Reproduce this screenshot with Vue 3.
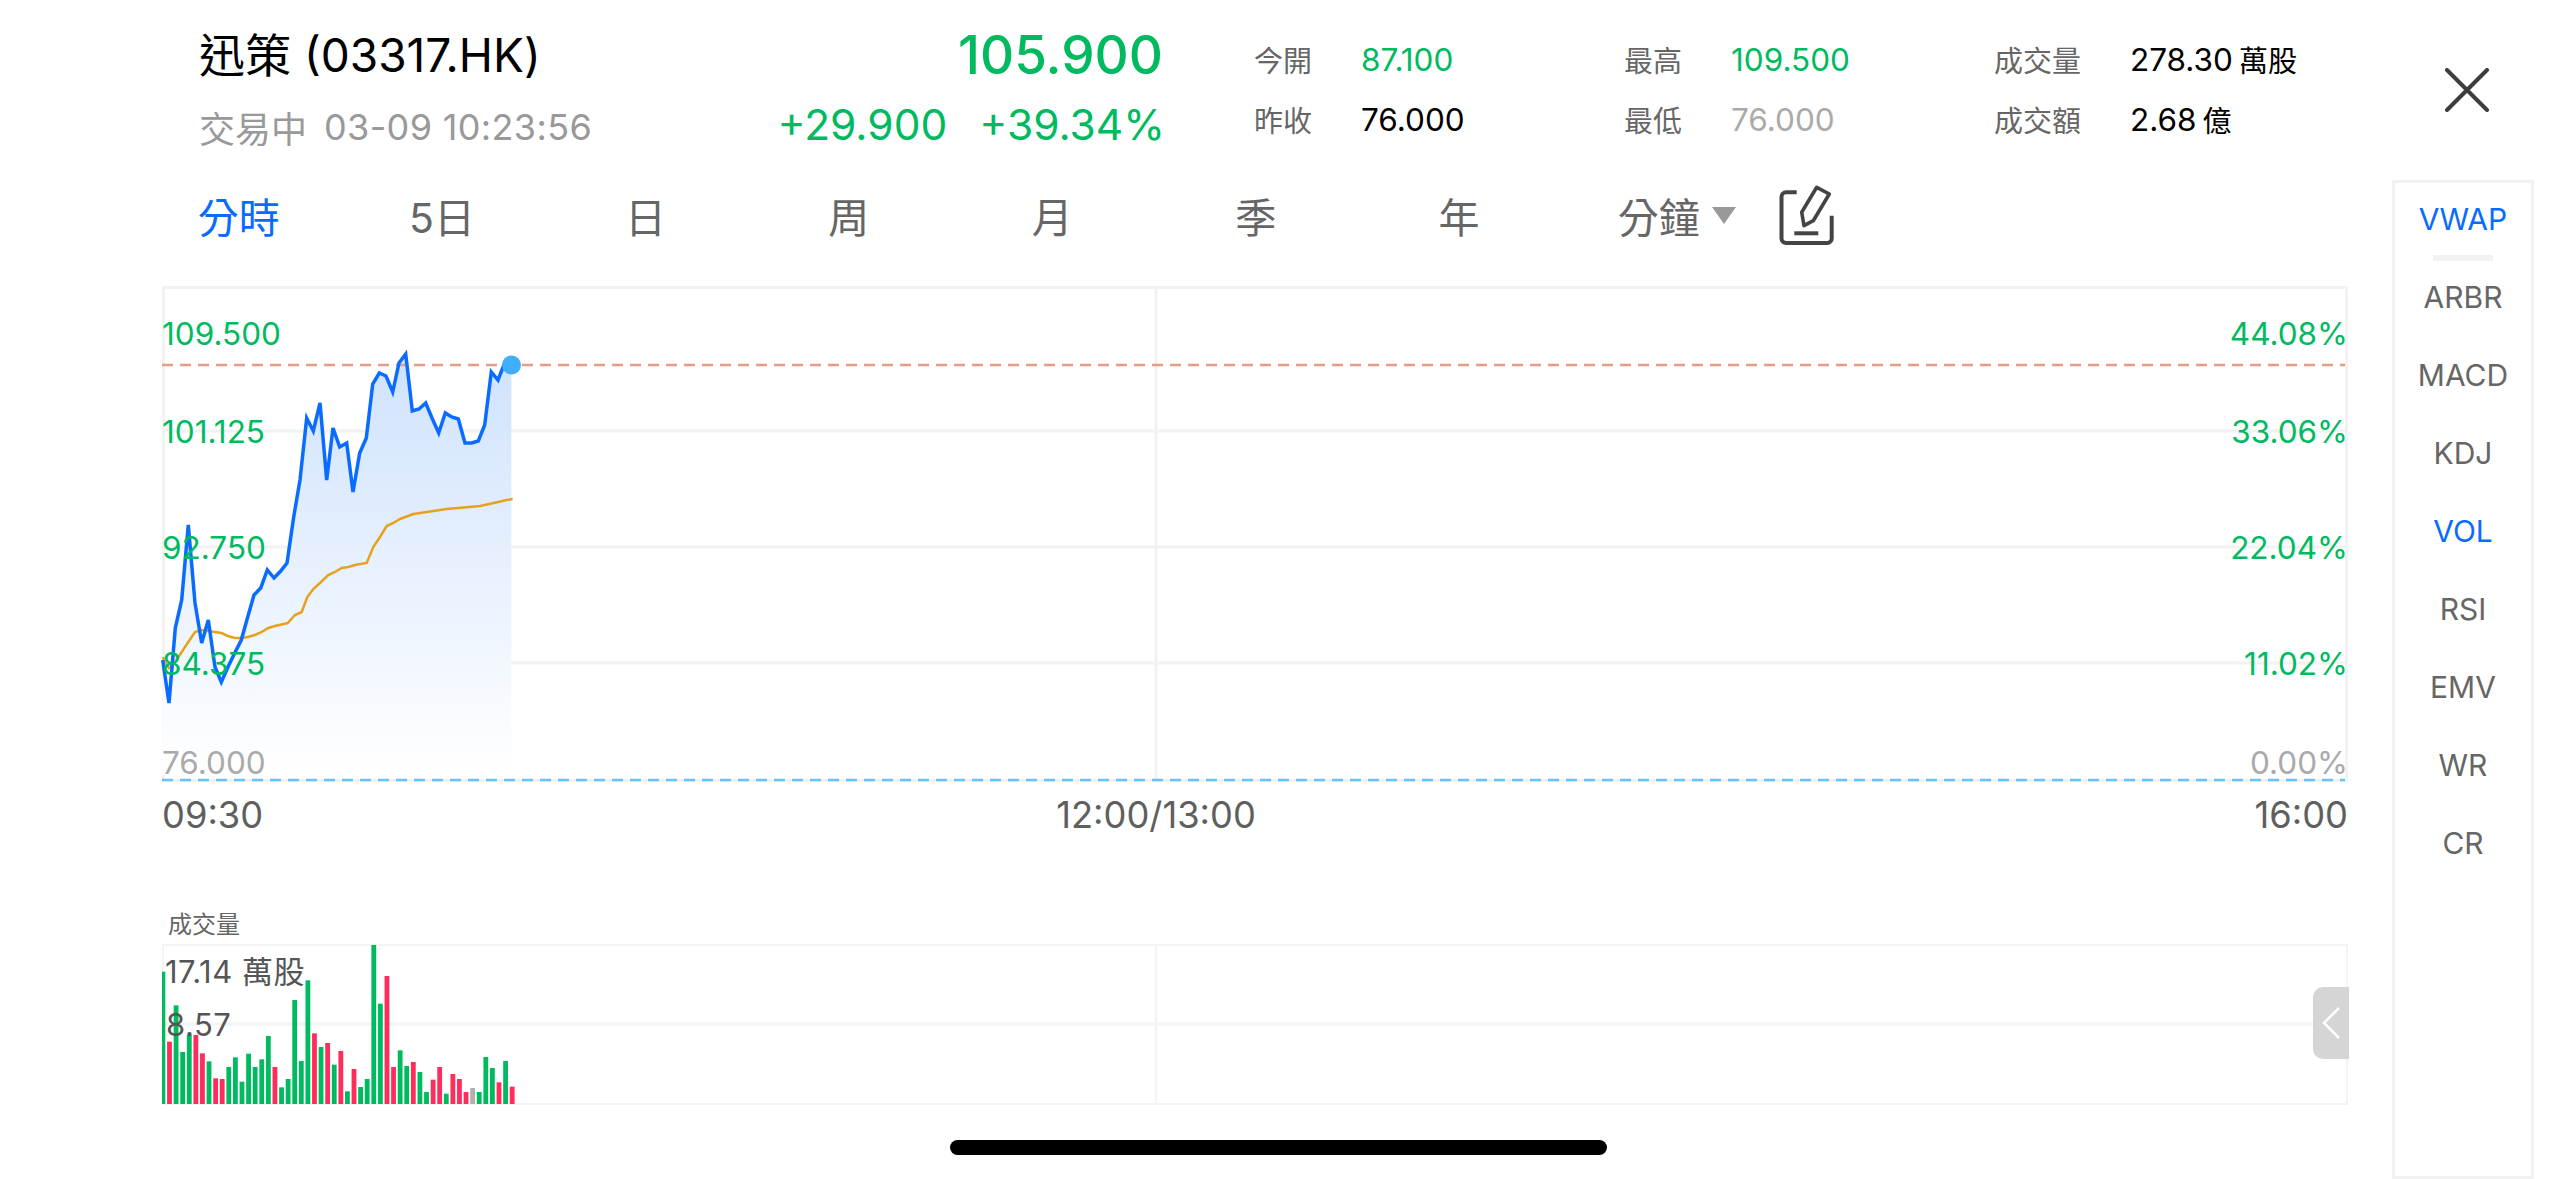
<script setup>
const blue = [[162.7,660],[169,703],[175.3,628],[181.7,600],[188.3,525],[195,603],[201.7,643],[208.3,620],[215,667],[221.3,682],[228,667],[234.7,653],[241.3,640],[247.7,617],[254,595],[260.7,588],[267.3,570],[274,578],[280.7,571],[287,563],[293.7,517],[300,480],[306.7,418],[313.3,431],[320,403],[326.7,480],[333,428],[339.7,447],[346.7,443],[353,492],[359.7,453],[366.3,438],[372.7,384],[379.3,373],[386,376],[392.7,392],[399,363],[405.7,354],[412.3,411],[419,409],[425.7,403],[432,418],[438.7,433],[445.3,413],[451.7,417],[458.3,419],[465,443],[471.7,443],[478.3,441],[484.7,425],[491.3,372],[498,380],[504.7,363],[511.3,365]]
const orange = [[162.7,657],[169,668],[175.3,662],[181.7,652],[188.3,642],[195,632],[201.7,630],[208.3,631],[221.3,633],[228,636],[234.7,638],[241.3,638],[247.7,637],[255,635],[261.7,632],[268.3,628],[275,626],[287.7,623],[295,615],[301.7,612],[307.3,597],[313.3,589],[320,583],[328.3,575],[335,572],[341.7,568],[348.3,567],[355,565],[366.7,563],[373.3,547],[380,537],[386.7,526],[393.3,523],[400,519],[413.3,514],[420,513],[426.7,512],[440,510],[446.7,509],[458.3,508],[480,506],[498.3,502],[506.7,500],[512.7,499]]
const str = (a) => a.map((p) => p.join(',')).join(' ')
const bluePts = str(blue)
const orangePts = str(orange)
const areaPts = `162,775 ${bluePts} 511.3,775`

const g = '#00ba5f', r = '#ff2d5c', n = '#b0b0b0'
const vols = [[215,g],[425,r],[316,g],[456,g],[405,g],[405,r],[460,r],[484,g],[535,r],[537,r],[501,g],[472,g],[545,g],[461,g],[501,g],[478,g],[408,g],[501,r],[562,g],[537,g],[300,g],[483,g],[241,g],[400,r],[441,g],[429,r],[494,g],[453,r],[574,g],[507,r],[561,g],[537,g],[135,g],[311,g],[228,r],[501,r],[451,g],[498,g],[486,r],[516,g],[576,g],[539,r],[501,r],[581,g],[522,r],[537,r],[576,r],[564,n],[576,g],[471,g],[504,g],[547,r],[483,g],[560,r]]
const bars = vols.map(([top, fill], i) => {
  const cx = 162.9 + i * 6.59
  const x = Math.max(162, cx - 2.4)
  const y = 900 + top / 3
  return { x, y, w: cx + 2.4 - x, h: 1104 - y, fill }
})

const tabs = ['分時', '5日', '日', '周', '月', '季', '年']
const stats = [
  [['今開', '87.100', 'up'], ['昨收', '76.000', '']],
  [['最高', '109.500', 'up'], ['最低', '76.000', 'dim']],
  [['成交量', '278.30', '', '萬股'], ['成交額', '2.68', '', '億']],
]
const sideItems = ['ARBR', 'MACD', 'KDJ', 'VOL', 'RSI', 'EMV', 'WR', 'CR']

const leftLabels = [['109.500', 345], ['101.125', 443], ['92.750', 559], ['84.375', 675]]
const rightLabels = [['44.08%', 345], ['33.06%', 443], ['22.04%', 559], ['11.02%', 675]]
</script>

<template>
  <div class="page">
    <div class="main">
      <header class="head">
        <div class="quote">
          <div class="q-row">
            <span class="name">迅策 (03317.HK)</span>
            <span class="price">105.900</span>
          </div>
          <div class="q-row second">
            <span class="status"><span>交易中</span><span class="clock">03-09 10:23:56</span></span>
            <span class="change"><span>+29.900</span><span>+39.34%</span></span>
          </div>
        </div>
        <div class="stats">
          <div v-for="(col, ci) in stats" :key="ci" class="stat-col">
            <div v-for="s in col" :key="s[0]" class="stat">
              <span class="stat-l">{{ s[0] }}</span>
              <span class="stat-v" :class="s[2]">{{ s[1] }}</span>
              <span v-if="s[3]" class="unit">{{ s[3] }}</span>
            </div>
          </div>
        </div>
      </header>

      <nav class="tabs">
        <span v-for="(t, i) in tabs" :key="t" class="tab" :class="{ on: i === 0 }">{{ t }}</span>
        <span class="tab menu">分鐘<i class="tri"></i></span>
        <svg class="draw" width="64" height="66" viewBox="0 0 64 66" fill="none" stroke="#444" stroke-width="4">
          <path d="M21.7 8.3H11a4.5 4.5 0 0 0-4.500 4.500V54.500A4.500 4.500 0 0 0 11 59H52.200a4.500 4.500 0 0 0 4.500-4.500V31.700"/>
          <path d="M26.700 28.300 41.700 3.300 54.300 10 38.300 36.700 29 41.700Z" stroke-width="3.600" stroke-linejoin="round"/>
          <path d="M19.300 49.300H43.300"/>
        </svg>
      </nav>

      <svg class="plot" width="2394" height="1179" viewBox="0 0 2394 1179">
        <defs>
          <linearGradient id="area" x1="0" y1="354" x2="0" y2="775" gradientUnits="userSpaceOnUse">
            <stop offset="0" stop-color="#cfe2fd"/>
            <stop offset="1" stop-color="#ffffff"/>
          </linearGradient>
        </defs>
        <!-- price chart frame and grid -->
        <g stroke="#f2f2f2" fill="none">
          <rect x="163.500" y="287.500" width="2183" height="493" stroke-width="3"/>
          <path d="M162 431H2347M162 547H2347M162 663H2347M1156 287V780" stroke-width="3"/>
        </g>
        <polygon :points="areaPts" fill="url(#area)"/>
        <path d="M162 365H2345" stroke="#e69d85" stroke-width="2.500" stroke-dasharray="11 7"/>
        <path d="M162 780H2345" stroke="#68c2f8" stroke-width="2.500" stroke-dasharray="11 7"/>
        <polyline :points="orangePts" fill="none" stroke="#e5a21c" stroke-width="2.500"/>
        <polyline :points="bluePts" fill="none" stroke="#0a6cff" stroke-width="3.500"/>
        <circle cx="511.500" cy="365" r="9.500" fill="#41aefc"/>

        <text v-for="l in leftLabels" :key="l[0]" class="axis up" x="162" :y="l[1]">{{ l[0] }}</text>
        <text class="axis dim" x="162" y="774">76.000</text>
        <text v-for="l in rightLabels" :key="l[0]" class="axis up" x="2348" :y="l[1]" text-anchor="end">{{ l[0] }}</text>
        <text class="axis dim" x="2348" y="774" text-anchor="end">0.00%</text>

        <text class="time" x="162" y="828">09:30</text>
        <text class="time" x="1156" y="828" text-anchor="middle">12:00/13:00</text>
        <text class="time" x="2348" y="828" text-anchor="end">16:00</text>

        <!-- volume chart -->
        <text class="vol-title" x="168" y="933">成交量</text>
        <g stroke="#f4f4f4" fill="none" stroke-width="2">
          <rect x="163" y="945" width="2184" height="159"/>
          <path d="M1156 945V1104"/>
          <path d="M162 1024H2347" stroke-width="3"/>
        </g>
        <rect v-for="(b, i) in bars" :key="i" :x="b.x" :y="b.y" :width="b.w" :height="b.h" :fill="b.fill"/>
        <text class="vol-l" x="165" y="983">17.14 萬股</text>
        <text class="vol-l" x="166" y="1036">8.57</text>
      </svg>

      <div class="handle">
        <svg width="20" height="34" viewBox="0 0 20 34" fill="none" stroke="#fff" stroke-width="2.500"><path d="M18 2 3 17l15 15"/></svg>
      </div>
    </div>

    <aside class="side-wrap">
      <button class="close" aria-label="關閉">
        <svg width="44" height="44" viewBox="0 0 44 44" stroke="#3d3d3d" stroke-width="4" stroke-linecap="round"><path d="M2 2 42 42M42 2 2 42"/></svg>
      </button>
      <div class="side">
        <div class="side-item on">VWAP</div>
        <div class="side-rule"></div>
        <div v-for="s in sideItems" :key="s" class="side-item" :class="{ on: s === 'VOL' }">{{ s }}</div>
      </div>
    </aside>

    <div class="home"></div>
  </div>
</template>

<style>
html, body { margin: 0; background: #fff; }
</style>

<style scoped>
.page {
  position: relative;
  width: 2556px;
  height: 1179px;
  display: flex;
  overflow: hidden;
  background: #fff;
  font-family: Inter, "Noto Sans CJK TC", sans-serif;
}
.main { position: relative; width: 2392px; flex: none; }
.head {
  display: flex;
  padding: 27px 0 0 199px;
  height: 140px;
  box-sizing: border-box;
}
.quote { width: 964px; flex: none; }
.q-row { display: flex; justify-content: space-between; align-items: center; height: 56px; }
.second { margin-top: 19px; height: 50px; }
.name { font-size: 46px; color: #000; margin-bottom: 6px; }
.price { font-size: 53px; color: #00ba5f; font-weight: 500; }
.status { display: flex; gap: 17px; font-size: 36px; color: #999; }
.clock { margin-top: 4px; letter-spacing: 0.35px; }
.change { display: flex; gap: 32px; font-size: 42.500px; color: #00ba5f; margin: 0 -2px 6px 0; }
.stats { display: flex; margin-left: 91px; padding-top: 12px; }
.stat-col { width: 370px; flex: none; display: flex; flex-direction: column; gap: 20px; }
.stat { display: flex; align-items: center; height: 40px; }
.stat-l { width: 107px; flex: none; font-size: 29px; color: #666; white-space: nowrap; }
.stat-col:last-child .stat-l { width: 136px; }
.stat-v { font-size: 31.500px; color: #000; white-space: nowrap; }
.stat-v.up { color: #00ba5f; }
.stat-v.dim { color: #aaa; }
.unit { font-size: 29px; color: #000; margin-left: 6px; }

.tabs {
  display: flex;
  align-items: center;
  padding-left: 137px;
  height: 76px;
  margin-top: 37px;
}
.tab { width: 203.400px; flex: none; text-align: center; font-size: 41px; color: #666; }
.tab.on { color: #0a6cff; }
.tab.menu { display: flex; align-items: center; gap: 12px; padding-left: 57px; box-sizing: border-box; }
.tri { width: 0; height: 0; border-left: 12px solid transparent; border-right: 12px solid transparent; border-top: 17px solid #999; }
.draw { margin: 4px 0 0 11px; flex: none; }

.plot { position: absolute; left: 0; top: 0; pointer-events: none; }
.axis { font-size: 31.500px; font-family: Inter, sans-serif; }
.axis.up { fill: #00ba5f; }
.axis.dim { fill: #aaa; }
.time { font-size: 36.300px; fill: #5f5f5f; font-family: Inter, sans-serif; }
.vol-title { font-size: 24px; fill: #666; }
.vol-l { font-size: 31px; fill: #555; letter-spacing: 0.5px; }

.handle {
  position: absolute;
  left: 2313px;
  top: 987px;
  width: 36px;
  height: 72px;
  background: #d5d5d5;
  border-radius: 10px 0 0 10px;
  display: flex;
  align-items: center;
  padding-left: 8px;
  box-sizing: border-box;
}

.side-wrap { flex: 1; display: flex; flex-direction: column; }
.close {
  align-self: flex-end;
  margin: 68px 67px 0 0;
  padding: 0;
  border: 0;
  background: none;
  height: 44px;
}
.side {
  margin-top: 68px;
  width: 142px;
  height: 999px;
  box-sizing: border-box;
  border: 3px solid #f2f2f2;
  display: flex;
  flex-direction: column;
  align-items: center;
}
.side-item { height: 78px; line-height: 78px; font-size: 30px; color: #666; flex: none; }
.side-item.on { color: #0a6cff; }
.side-item:first-child { margin-top: -3px; }
.side-rule { width: 60px; height: 6px; background: #f2f2f2; margin: -3px 0; flex: none; }

.home {
  position: absolute;
  left: 950px;
  top: 1140px;
  width: 657px;
  height: 15px;
  border-radius: 8px;
  background: #000;
}
</style>
